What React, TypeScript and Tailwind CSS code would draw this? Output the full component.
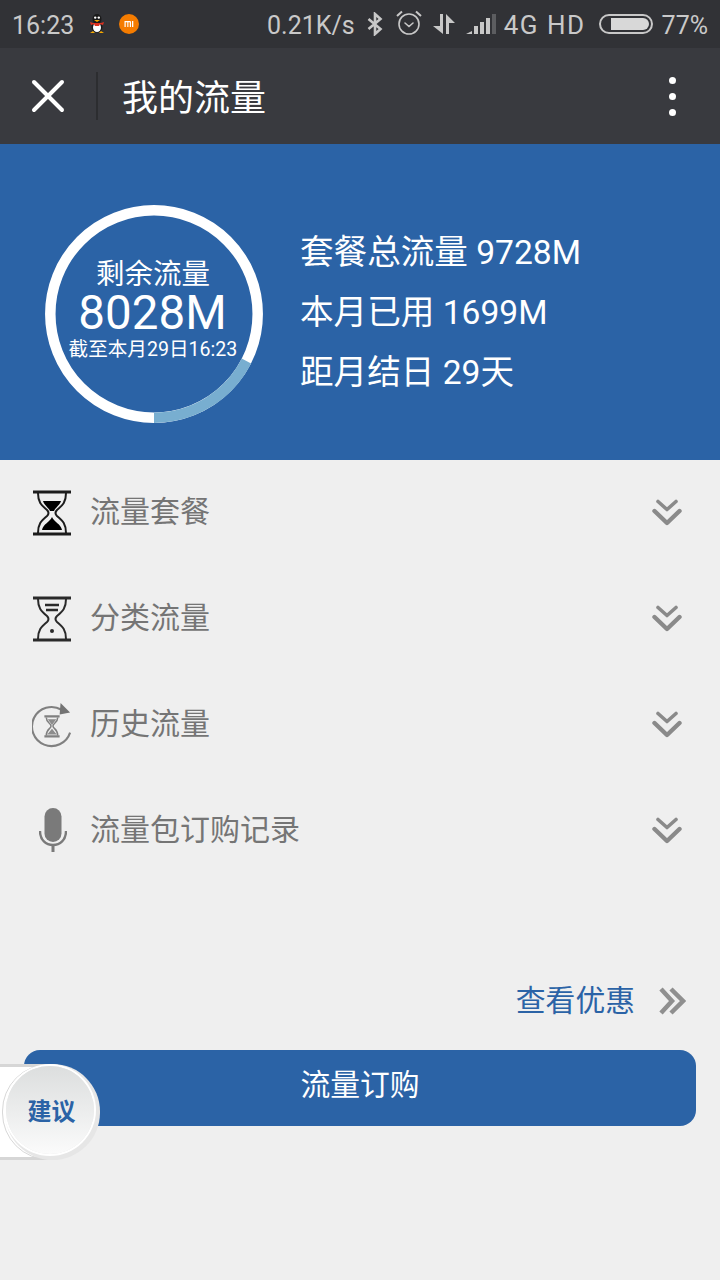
import React from 'react';
import { X } from 'lucide-react';

const font = { fontFamily: 'Roboto, "Noto Sans CJK SC", sans-serif' };

const QQIcon = () => (
  <svg width="16" height="20" viewBox="0 0 16 20">
    <ellipse cx="8" cy="5" rx="4.5" ry="5" fill="#1a1a1a" />
    <ellipse cx="8" cy="13" rx="5.5" ry="5.5" fill="#1a1a1a" />
    <ellipse cx="8" cy="13.5" rx="4" ry="4.5" fill="#fff" />
    <circle cx="6.2" cy="3.6" r="1.2" fill="#fff" />
    <circle cx="9.8" cy="3.6" r="1.2" fill="#fff" />
    <path d="M5 6h6l-3 2z" fill="#f5a800" />
    <path d="M1 8l3 1h8l3-1-1 3-3-1-1 2H6l-1-2-3 1z" fill="#e0301e" />
    <path d="M1 19l3-2 2 2zM10 19l2-2 3 2z" fill="#f5a800" />
  </svg>
);

const MiIcon = () => (
  <svg width="20" height="20" viewBox="0 0 20 20">
    <circle cx="10" cy="10" r="10" fill="#f57c00" />
    <path d="M5.5 7h5.5a1 1 0 0 1 1 1v5h-1.2V8.2H9.4V13H8.3V8.2H6.7V13H5.5zM13 7h1.3v6H13z" fill="#fff" />
  </svg>
);

const Bluetooth = () => (
  <svg width="16" height="24" viewBox="0 0 16 24" fill="none" stroke="#c8c8c8" strokeWidth="2.6">
    <path d="M1.5 7l12 10-5.5 5V2l5.500 5-12 10" />
  </svg>
);

const Alarm = () => (
  <svg width="26" height="25" viewBox="0 0 26 25" fill="none" stroke="#c8c8c8" strokeWidth="1.6">
    <circle cx="13" cy="14" r="10" />
    <path d="M9 13l4 3.5 4-3.5" strokeLinecap="round" />
    <path d="M1 6l5-4.5M25 6l-5-4.5" strokeWidth="2" />
  </svg>
);

const DataArrows = () => (
  <svg width="22" height="20" viewBox="0 0 22 20" fill="#c8c8c8">
    <path d="M7 0h3v20L0 12h7z" />
    <path d="M13 20V0l9 9h-6v11z" />
  </svg>
);

const Signal = () => (
  <svg width="30" height="20" viewBox="0 0 30 20">
    <path d="M0 20l6-3v3z" fill="#c8c8c8" />
    <rect x="8" y="12" width="4" height="8" fill="#c8c8c8" />
    <rect x="14" y="8" width="4" height="12" fill="#c8c8c8" />
    <rect x="20" y="4" width="4" height="16" fill="#c8c8c8" />
    <rect x="26" y="0" width="4" height="20" fill="#5c5d60" />
  </svg>
);

const Battery = () => (
  <div className="w-[54px] h-[20px] rounded-full border-2 border-[#c8c8c8] p-[2px] flex justify-end">
    <div className="w-[38px] h-full rounded-r-full bg-[#d8d8d8]" />
  </div>
);

const StatusBar = () => (
  <div className="h-12 bg-[#313236] flex items-center justify-between pl-3 pr-3 text-[#c9c9c9] text-[25px]">
    <div className="flex items-center">
      <span className="mt-[3px]">16:23</span>
      <span className="ml-[15px]"><QQIcon /></span>
      <span className="ml-[14px]"><MiIcon /></span>
    </div>
    <div className="flex items-center">
      <span className="mt-[3px]">0.21K/s</span>
      <span className="ml-3"><Bluetooth /></span>
      <span className="ml-[13px] -mt-[3px]"><Alarm /></span>
      <span className="ml-[11px]"><DataArrows /></span>
      <span className="ml-[11px]"><Signal /></span>
      <span className="ml-2 mt-[3px] tracking-[1.5px] text-[26px]">4G HD</span>
      <span className="ml-[13px]"><Battery /></span>
      <span className="ml-[9px] mt-[3px]">77%</span>
    </div>
  </div>
);

const NavBar = () => (
  <div className="h-24 bg-[#393a3f] flex items-center text-white">
    <div className="w-[96px] flex items-center justify-center">
      <X size={56} strokeWidth={4} absoluteStrokeWidth />
    </div>
    <div className="w-[2px] h-12 bg-[#2c2d30]" />
    <span className="ml-6 mt-[6px] text-[36px] flex-1">我的流量</span>
    <div className="flex flex-col gap-[9px] mr-[44px]">
      <span className="w-[7px] h-[7px] rounded-full bg-white" />
      <span className="w-[7px] h-[7px] rounded-full bg-white" />
      <span className="w-[7px] h-[7px] rounded-full bg-white" />
    </div>
  </div>
);

const Gauge = () => (
  <div className="relative w-[218px] h-[218px] flex flex-col items-center text-white">
    <svg className="absolute inset-0" width="218" height="218" viewBox="0 0 218 218" fill="none" strokeWidth="10.5">
      <circle cx="109" cy="109" r="103.7" stroke="#ffffff" />
      <path d="M109 212.7A103.7 103.7 0 0 0 201.4 156" stroke="#78aed0" />
    </svg>
    <span className="mt-[54px] -ml-[2px] text-[28.5px] leading-[32px]">剩余流量</span>
    <span className="text-[47.5px] leading-[44px] -ml-[3px]">8028M</span>
    <span className="text-[19.6px] leading-[24px] mt-[3px] -ml-[2px] whitespace-nowrap">截至本月29日16:23</span>
  </div>
);

const Hero = () => (
  <div className="h-[316px] bg-[#2b63a6] flex items-center pl-[45px] pt-6 text-white">
    <Gauge />
    <div className="ml-[37px] -mt-[2px] flex flex-col gap-5 text-[33.6px] leading-10">
      <span>套餐总流量 9728M</span>
      <span>本月已用 1699M</span>
      <span>距月结日 29天</span>
    </div>
  </div>
);

const HourglassFull = () => (
  <svg width="40" height="46" viewBox="0 0 40 46" fill="none" stroke="#1c1c1c" strokeWidth="2">
    <path d="M1 2h38M1 44h38" strokeWidth="3" />
    <path d="M6 3c0 9 3 12 9 17 2 2 2 4 0 6-6 5-9 8-9 17M34 3c0 9-3 12-9 17-2 2-2 4 0 6 6 5 9 8 9 17" />
    <path d="M11 11h18c-1 4-6 7-7 10h-4c-1-3-6-6-7-10zM20 27c2 5 9 7 10 13H10c1-6 8-8 10-13z" fill="#000" stroke="none" />
  </svg>
);

const HourglassEmpty = () => (
  <svg width="40" height="46" viewBox="0 0 40 46" fill="none" stroke="#2a2a2a" strokeWidth="2">
    <path d="M1 2h38M1 44h38" strokeWidth="3" />
    <path d="M6 3c0 9 3 12 9 17 2 2 2 4 0 6-6 5-9 8-9 17M34 3c0 9-3 12-9 17-2 2-2 4 0 6 6 5 9 8 9 17" />
    <path d="M13 9h14M14 14h12" strokeWidth="2.6" />
    <circle cx="20" cy="35" r="2" fill="#2a2a2a" stroke="none" />
  </svg>
);

const HistoryIcon = () => (
  <svg width="42" height="46" viewBox="0 0 42 46" fill="none" stroke="#808080" strokeWidth="2">
    <path d="M31 7A20.500 20.500 0 1 0 40 31" strokeWidth="2.2" />
    <path d="M30 0l10 10-11 2z" fill="#737373" stroke="none" />
    <path d="M13 14h16M13 35h16" strokeWidth="2.4" />
    <path d="M15 15c0 6 5 6 5 9s-5 3-5 10M27 15c0 6-5 6-5 9s5 3 5 10" strokeWidth="1.6" />
    <path d="M16.5 17h9l-4.500 6zM21 27l5 6H16z" fill="#8c8c8c" stroke="none" />
  </svg>
);

const MicIcon = () => (
  <svg width="28" height="46" viewBox="0 0 28 46" fill="none">
    <rect x="5.500" y="0" width="17" height="34" rx="8.500" fill="#7a7a7a" />
    <path d="M1 23c0 9 6 14 13 14s13-5 13-14" stroke="#7a7a7a" strokeWidth="2.400" />
    <rect x="12.500" y="36" width="3" height="8" fill="#7a7a7a" />
  </svg>
);

const ChevronsDown = () => (
  <svg width="30" height="30" viewBox="0 0 30 30" fill="none" stroke="#8a8a8a" strokeLinecap="round" strokeLinejoin="round">
    <path d="M6 2.500l9 8 9-8" strokeWidth="3.600" />
    <path d="M2.500 12l12.500 12 12.500-12" strokeWidth="4.400" />
  </svg>
);

const rows = [
  { label: '流量套餐', icon: <HourglassFull />, iconClass: 'ml-[32px] w-[40px]' },
  { label: '分类流量', icon: <HourglassEmpty />, iconClass: 'ml-[32px] w-[40px]' },
  { label: '历史流量', icon: <HistoryIcon />, iconClass: 'ml-[32px] w-[40px]' },
  { label: '流量包订购记录', icon: <MicIcon />, iconClass: 'ml-[39px] w-[33px]' },
];

const Row = ({ label, icon, iconClass }: any) => (
  <div className="h-[102px] flex items-center">
    <div className={`${iconClass} flex items-center mt-[3px]`}>{icon}</div>
    <span className="ml-[18px] mt-[1px] flex-1 text-[30px] text-[#757575]">{label}</span>
    <div className="mr-[38px] mt-[5px]"><ChevronsDown /></div>
  </div>
);

const FloatButton = () => (
  <div className="absolute left-0 top-[1064px] w-[100px] h-[96px]">
    {/* strip the round button sits on */}
    <div className="absolute left-0 top-0 w-[50px] h-[96px] bg-white border-y-[3px] border-[#d6d6d6]" />
    <div className="absolute left-[2px] top-0 w-[94px] h-[96px] rounded-full border border-[#d8d8d8]" />
    <div className="absolute left-[5px] top-0 w-[95px] h-[96px] rounded-full bg-[#e6e6e6] flex items-start justify-start">
      <div className="w-[88px] h-[88px] mt-[2px] ml-[1px] rounded-full bg-gradient-to-b from-[#dcdede] to-[#fbfbfb] flex items-center justify-center ring-2 ring-white">
        <span className="text-[24px] font-bold text-[#2b63a6] ml-[3px] mt-[4px]">建议</span>
      </div>
    </div>
  </div>
);

export default function App() {
  return (
    <div className="relative w-[720px] h-[1280px] bg-[#efefef] flex flex-col overflow-hidden" style={font}>
      <StatusBar />
      <NavBar />
      <Hero />
      <div className="flex flex-col gap-1">
        {rows.map((r) => (
          <Row key={r.label} {...r} />
        ))}
      </div>
      <div className="mt-[96px] h-[50px] flex items-center justify-end pr-[34px]">
        <span className="text-[29.8px] text-[#2b63a6]">查看优惠</span>
        <svg className="ml-6" width="27" height="28" viewBox="0 0 27 28" fill="none" stroke="#8f8f8f" strokeWidth="4.500">
          <path d="M2 2l11 12L2 26M12 2l12 12-12 12" />
        </svg>
      </div>
      <div className="mt-[24px] mx-6 h-[76px] pb-[6px] rounded-2xl bg-[#2b63a6] flex items-center justify-center text-white text-[29.8px]">
        流量订购
      </div>
      <FloatButton />
    </div>
  );
}
